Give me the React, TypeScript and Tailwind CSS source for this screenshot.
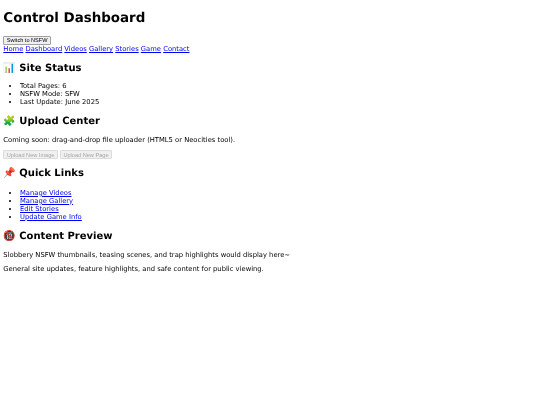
const font = { fontFamily: '"DejaVu Sans", sans-serif' };

const navLinks = ["Home", "Dashboard", "Videos", "Gallery", "Stories", "Game", "Contact"];
const quickLinks = ["Manage Videos", "Manage Gallery", "Edit Stories", "Update Game Info"];

function Heading({ children }: { children: React.ReactNode }) {
  return <h2 className="text-[10px] leading-[11.6px] font-bold text-black">{children}</h2>;
}

function SmallButton({ children, disabled }: { children: React.ReactNode; disabled?: boolean }) {
  return (
    <button
      disabled={disabled}
      className={
        disabled
          ? "h-[8.4px] rounded-[1px] border-[0.8px] border-[#dcdcdc] bg-[#f0f0f0] px-[2.5px] font-['Liberation_Sans',sans-serif] text-[5.6px] leading-[6px] text-[#a6a6a6]"
          : "block h-[8.4px] rounded-[1px] border-[0.8px] border-[#a0a0a0] bg-[#efefef] px-[2.5px] font-['Liberation_Sans',sans-serif] text-[5.6px] leading-[6px] text-black"
      }
    >
      {children}
    </button>
  );
}

export default function App() {
  return (
    <main className="min-h-screen bg-white px-[3.33px] pt-[10.6px] text-[6.78px] leading-[8px] text-black blur-[0.35px] [text-rendering:geometricPrecision]" style={font}>
      <h1 className="text-[13.43px] leading-[15.5px] font-bold">Control Dashboard</h1>

      <div className="mt-[10.2px]">
        <SmallButton>Switch to NSFW</SmallButton>
      </div>

      <nav className="mt-[0.8px]">
        {navLinks.map((l) => (
          <span key={l}>
            <a href="#" className="text-[#0000ee] underline">{l}</a>{" "}
          </span>
        ))}
      </nav>

      <section className="mt-[9.2px]">
        <Heading>📊 Site Status</Heading>
        <ul className="mt-[8.2px] list-disc pl-[16.67px]">
          <li>Total Pages: 6</li>
          <li>NSFW Mode: SFW</li>
          <li>Last Update: June 2025</li>
        </ul>
      </section>

      <section className="mt-[9.2px]">
        <Heading>🧩 Upload Center</Heading>
        <p className="mt-[9px]">Coming soon: drag-and-drop file uploader (HTML5 or Neocities tool).</p>
        <div className="mt-[6.2px] flex gap-[2px]">
          <SmallButton disabled>Upload New Image</SmallButton>
          <SmallButton disabled>Upload New Page</SmallButton>
        </div>
      </section>

      <section className="mt-[9.7px]">
        <Heading>📌 Quick Links</Heading>
        <ul className="mt-[8.7px] list-disc pl-[16.67px]">
          {quickLinks.map((l) => (
            <li key={l}><a href="#" className="text-[#0000ee] underline">{l}</a></li>
          ))}
        </ul>
      </section>

      <section className="mt-[10.2px]">
        <Heading>🔞 Content Preview</Heading>
        <p className="mt-[8.2px]">Slobbery NSFW thumbnails, teasing scenes, and trap highlights would display here~</p>
        <p className="mt-[6.67px]">General site updates, feature highlights, and safe content for public viewing.</p>
      </section>
    </main>
  );
}
